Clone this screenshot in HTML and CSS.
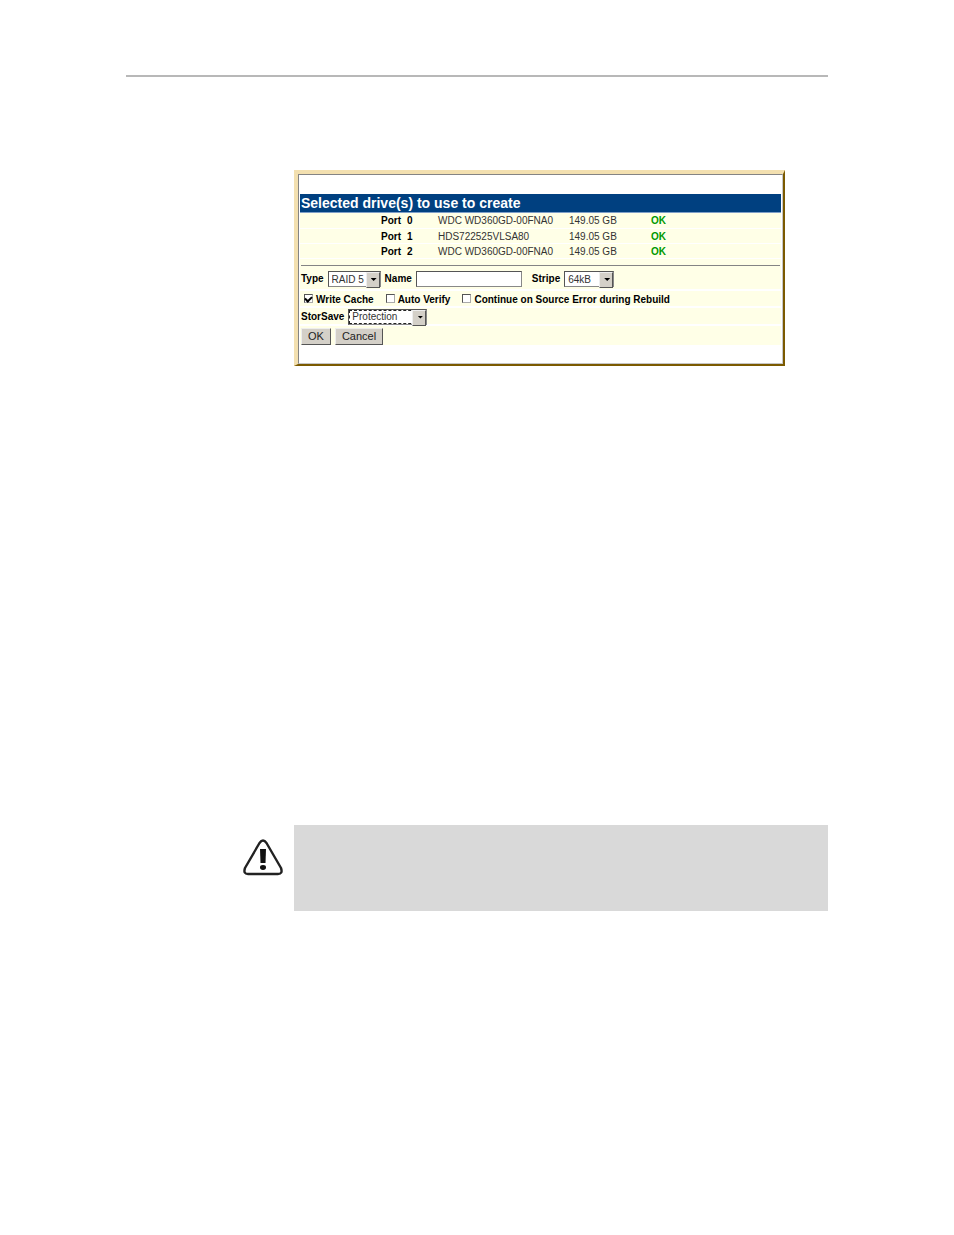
FILE: index.html
```html
<!DOCTYPE html>
<html lang="en">
<head>
<meta charset="utf-8">
<title>Selected drive(s) to use to create</title>
<link rel="stylesheet" href="styles.css">
</head>
<body>
<main class="page">
  <hr class="page-rule">
  <form class="panel">
    <div class="panel-inner">
      <h1 class="title">Selected drive(s) to use to create</h1>
      <table class="drives">
        <colgroup><col class="c-pad"><col class="c-port"><col class="c-model"><col class="c-size"><col></colgroup>
        <tbody>
          <tr><td></td><th scope="row">Port<span class="num">0</span></th><td>WDC WD360GD-00FNA0</td><td>149.05 GB</td><td class="ok">OK</td></tr>
          <tr><td></td><th scope="row">Port<span class="num">1</span></th><td>HDS722525VLSA80</td><td>149.05 GB</td><td class="ok">OK</td></tr>
          <tr><td></td><th scope="row">Port<span class="num">2</span></th><td>WDC WD360GD-00FNA0</td><td>149.05 GB</td><td class="ok">OK</td></tr>
        </tbody>
      </table>
      <div class="group">
        <hr class="divider">
        <div class="row row-fields">
          <label for="type">Type</label>
          <span class="drop drop-type"><select id="type"><option>RAID 5</option></select></span>
          <label for="name">Name</label>
          <input class="name" id="name" type="text">
          <label class="stripe-label" for="stripe">Stripe</label>
          <span class="drop drop-stripe"><select id="stripe"><option>64kB</option></select></span>
        </div>
      </div>
      <div class="row row-checks">
        <label class="check"><input type="checkbox" checked>Write Cache</label>
        <label class="check"><input type="checkbox">Auto Verify</label>
        <label class="check"><input type="checkbox">Continue on Source Error during Rebuild</label>
      </div>
      <div class="row row-save">
        <label for="save">StorSave</label>
        <span class="drop drop-save"><select id="save"><option>Protection</option></select></span>
      </div>
      <div class="row row-buttons">
        <button class="btn" type="button">OK</button>
        <button class="btn btn-wide" type="button">Cancel</button>
      </div>
    </div>
  </form>
  <aside class="note">
    <svg class="warning" viewBox="0 0 42 38" role="img" aria-label="Warning">
      <path d="M17.500 4 Q21 -1 24.500 4 L39 29 Q41 35 36 35 H6 Q1 35 3 29 Z" fill="#fff" stroke="#222" stroke-width="2.400" stroke-linejoin="round"/>
      <path d="M18 10 H24 L23.500 24 H18.500 Z" fill="#111"/>
      <ellipse cx="21" cy="28.500" rx="3" ry="2.400" fill="#111"/>
    </svg>
    <div class="note-box"></div>
  </aside>
</main>
</body>
</html>
```
FILE: styles.css
```css
* { box-sizing: border-box; }

body {
  margin: 0;
  background: #fff;
  color: #000;
  font: 10px/14px "Liberation Sans", Arial, sans-serif;
}

.page { padding: 75px 126px 324px; }

.page-rule {
  height: 2px;
  margin: 0 0 93px;
  border: 0;
  background: #b8b8b8;
}

.panel {
  max-width: 491px;
  margin: 0 0 459px 168px;
  border-style: solid;
  border-width: 4px 2px 2px 4px;
  border-color: #f3e0b0 #7b5a00 #7b5a00 #f3e0b0;
}

.panel-inner {
  padding: 19px 1px 18px;
  border: 1px solid;
  border-color: #848484 #c6c6c6 #c6c6c6 #848484;
}

.title {
  margin: 0;
  padding: 0 1px;
  border-bottom: 1px solid #7f9fc8;
  background: #004080;
  color: #fff;
  font-size: 14px;
  line-height: 18px;
}

.drives {
  width: 100%;
  table-layout: fixed;
  border-collapse: collapse;
}

.c-pad { width: 81px; }
.c-port { width: 57px; }
.c-model { width: 131px; }
.c-size { width: 82px; }

.drives td, .drives th {
  height: 15px;
  padding: 2px 0 0;
  border-bottom: 1px solid #fff;
  background: #ffffe7;
  line-height: 12px;
  text-align: left;
  white-space: nowrap;
}

.drives td { color: #333; }
.num { margin-left: 6px; }
.drives .ok { color: #009900; font-weight: bold; }

.group, .row { background: #ffffe7; }
.group { padding-top: 6px; }

.divider {
  height: 1px;
  margin: 0 1px;
  border: 0;
  background: #848484;
}

.row {
  display: flex;
  align-items: center;
  padding: 0 1px;
  border-bottom: 2px solid #fff;
  font-weight: bold;
  white-space: nowrap;
}

.row-fields { height: 25px; padding-top: 4px; gap: 4px; }
.row-checks { height: 17px; padding-top: 3px; padding-left: 4px; gap: 12px; }
.row-save { height: 18px; padding-top: 2px; gap: 4px; }
.row-buttons { height: 19px; padding-top: 2px; gap: 4px; border: 0; }

.drop { position: relative; display: flex; height: 16px; }
.drop-type { width: 53px; }
.drop-stripe { width: 50px; }
.drop-save { width: 79px; }

.drop select, .name {
  width: 100%;
  height: 100%;
  margin: 0;
  padding: 0 3px;
  appearance: none;
  border: 1px solid;
  border-color: #555 #888 #888 #555;
  border-radius: 0;
  background: #fff;
  color: #333;
  font: 10px/13px "Liberation Sans", Arial, sans-serif;
}

.drop::before {
  content: "";
  position: absolute;
  top: 1px;
  right: 1px;
  width: 12px;
  height: 14px;
  border: 1px solid;
  border-color: #eee #555 #555 #eee;
  background: #d4d0c8;
  pointer-events: none;
}

.drop::after {
  content: "";
  position: absolute;
  top: 7px;
  right: 4px;
  width: 6px;
  height: 3px;
  background: #000;
  clip-path: polygon(0 0, 100% 0, 50% 100%);
  pointer-events: none;
}

.drop-save select { outline: 1px dashed #222; outline-offset: -2px; }
.name { width: 106px; height: 16px; }
.stripe-label { margin-left: 6px; }

.check { display: flex; align-items: center; gap: 3px; }

.check input {
  display: grid;
  place-items: center;
  width: 9px;
  height: 9px;
  margin: 0 0 2px;
  appearance: none;
  border: 1px solid;
  border-color: #555 #aaa #aaa #555;
  background: #fff;
}

.check input:checked::before {
  content: "";
  width: 5px;
  height: 3px;
  border: solid #000;
  border-width: 0 0 2px 2px;
  transform: rotate(-45deg);
}

.btn {
  width: 30px;
  height: 17px;
  padding: 0;
  border: 1px solid;
  border-color: #eee #555 #555 #eee;
  background: #d4d0c8;
  color: #222;
  font: 11px/14px "Liberation Sans", Arial, sans-serif;
}

.btn-wide { width: 48px; }

.note { display: flex; gap: 10px; padding-left: 116px; }
.warning { flex: none; width: 42px; height: 38px; margin-top: 14px; }
.note-box { flex: 1; min-height: 86px; background: #d9d9d9; }
```
